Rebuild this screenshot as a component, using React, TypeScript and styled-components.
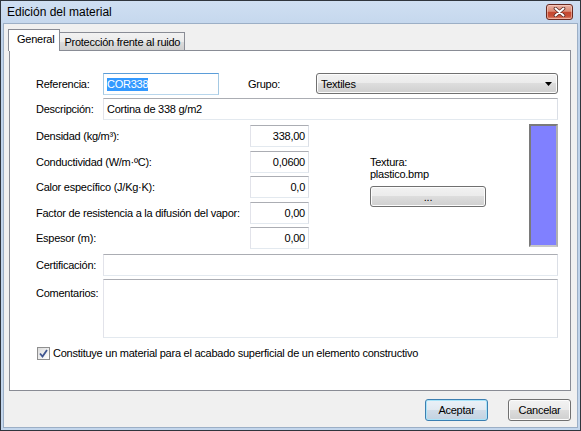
import React from "react";
import styled, { createGlobalStyle, css } from "styled-components";

const Global = createGlobalStyle`
  html, body { margin: 0; padding: 0; background: #fff; }
  body {
    width: 581px; height: 431px; overflow: hidden;
    font-family: "Liberation Sans", Arial, sans-serif;
    font-size: 11px; letter-spacing: -0.25px; color: #000;
  }
  * { box-sizing: border-box; }
`;

const Window = styled.div`
  width: 581px;
  height: 431px;
  border: 1px solid #2f353d;
  background: linear-gradient(#cfdff2, #bed2ea 40px, #c3d6ec);
  padding: 0 2px 2px 2px;
  display: flex;
  flex-direction: column;
`;

const TitleBar = styled.div`
  height: 22px;
  flex: none;
  display: flex;
  align-items: center;
  justify-content: space-between;
  padding: 0 5px 0 4px;
`;

const Title = styled.span`
  font-size: 12px;
  letter-spacing: 0;
  color: #000;
`;

const CloseButton = styled.div`
  width: 27px;
  height: 16px;
  border: 1px solid #6a2a21;
  border-radius: 3px;
  background: linear-gradient(#eab4a6 0%, #db8a74 45%, #c4472f 52%, #c85038 80%, #e39078 100%);
  box-shadow: inset 0 0 0 1px rgba(255, 220, 210, 0.5);
  display: flex;
  align-items: center;
  justify-content: center;
`;

const Client = styled.div`
  flex: 1;
  display: flex;
  flex-direction: column;
  background: #f0f0f0;
  border: 1px solid #9cafc6;
  padding: 5px 6px 6px 5px;
`;

const TabStrip = styled.div`
  height: 21px;
  flex: none;
  display: flex;
  align-items: flex-end;
  position: relative;
  z-index: 1;
`;

const Tab = styled.div<{ $active?: boolean }>`
  height: 18px;
  padding: 0 4px 0 5px;
  display: flex;
  align-items: center;
  border: 1px solid #898c95;
  border-bottom: none;
  background: linear-gradient(#f2f2f2 0%, #ebebeb 50%, #dddddd 50%, #cfcfcf 100%);
  margin-left: -1px;
  ${(p) =>
    p.$active &&
    css`
      height: 22px;
      margin-bottom: -1px;
      padding: 0 5px 3px 8px;
      background: #fff;
      margin-left: -1px;
      margin-right: -1px;
      position: relative;
      z-index: 2;
    `}
`;

const Panel = styled.div`
  flex: 1;
  background: #fff;
  border: 1px solid #898c95;
  padding: 22px 12px 0 26px;
  display: flex;
  flex-direction: column;
`;

const Row = styled.div<{ $mt?: number; $top?: boolean }>`
  display: flex;
  align-items: ${(p) => (p.$top ? "flex-start" : "center")};
  margin-top: ${(p) => p.$mt ?? 0}px;
`;

const FieldLabel = styled.span<{ $w: number; $pt?: number }>`
  flex: none;
  width: ${(p) => p.$w}px;
  padding-top: ${(p) => p.$pt ?? 0}px;
  white-space: nowrap;
`;

const GroupLabel = styled(FieldLabel)`
  margin-left: 29px;
`;

const TextBox = styled.div<{ $w?: number; $h?: number; $right?: boolean; $focused?: boolean }>`
  flex: ${(p) => (p.$w ? "none" : "1")};
  width: ${(p) => (p.$w ? `${p.$w}px` : "auto")};
  height: ${(p) => p.$h ?? 22}px;
  border: 1px solid;
  border-color: ${(p) =>
    p.$focused ? "#5b9dd9 #a4c9e3 #b8d6ec #a4c9e3" : "#abadb3 #dbdfe6 #e3e9ef #e2e3ea"};
  background: #fff;
  display: flex;
  align-items: ${(p) => (p.$h && p.$h > 22 ? "flex-start" : "center")};
  justify-content: ${(p) => (p.$right ? "flex-end" : "flex-start")};
  padding: 0 3px;
  white-space: nowrap;
  overflow: hidden;
`;

const Selection = styled.span`
  background: #3399ff;
  color: #fff;
  line-height: 13px;
`;

const Combo = styled.div`
  flex: 1;
  height: 21px;
  border: 1px solid #707070;
  border-radius: 3px;
  background: linear-gradient(#f2f2f2 0%, #ebebeb 50%, #dddddd 50%, #cfcfcf 100%);
  box-shadow: inset 0 0 0 1px #fcfcfc;
  display: flex;
  align-items: center;
  justify-content: space-between;
  padding: 0 5px 0 4px;
  margin-top: -1px;
`;

const Middle = styled.div`
  display: flex;
  align-items: flex-start;
  margin-top: 5px;
`;

const PropList = styled.div`
  display: grid;
  grid-template-columns: 214px 59px;
  grid-auto-rows: 22px;
  row-gap: 3.5px;
  align-items: center;
`;

const Texture = styled.div`
  margin-left: 61px;
  padding-top: 31px;
  width: 116px;
  display: flex;
  flex-direction: column;
`;

const TextureText = styled.div`
  line-height: 12px;
`;

const PushButton = styled.div<{ $w: number; $default?: boolean }>`
  width: ${(p) => p.$w}px;
  height: 22px;
  border: 1px solid #707070;
  border-radius: 3px;
  background: linear-gradient(#f2f2f2 0%, #ebebeb 50%, #dddddd 50%, #cfcfcf 100%);
  box-shadow: inset 0 0 0 1px #fcfcfc;
  display: flex;
  align-items: center;
  justify-content: center;
  ${(p) =>
    p.$default &&
    css`
      border-color: #3c7fb1;
      background: linear-gradient(#eaf1f7 0%, #e1e9f1 50%, #d0dce8 50%, #c3d2e1 100%);
      box-shadow: inset 0 0 0 1px #a9e4f9;
    `}
`;

const TextureButton = styled(PushButton)`
  margin-top: 6px;
  height: 21px;
`;

const Swatch = styled.div`
  margin-left: auto;
  margin-top: -1px;
  width: 29px;
  height: 123px;
  background: #8080ff;
  border: 2px solid;
  border-color: #7a7a7a #b0b0b0 #c8c8c8 #7a7a7a;
`;

const CheckRow = styled.div`
  display: flex;
  align-items: center;
  gap: 3px;
  margin-top: 8px;
  height: 14px;
  padding-left: 1px;
`;

const CheckBox = styled.div`
  width: 13px;
  height: 13px;
  border: 1px solid #8f8f8f;
  background: linear-gradient(135deg, #dcdcdc, #ffffff);
  padding: 1px;
  display: flex;
  align-items: center;
  justify-content: center;
`;

const ButtonRow = styled.div`
  display: flex;
  justify-content: flex-end;
  gap: 20px;
  margin-top: 8px;
`;

const props = [
  { label: "Densidad (kg/m³):", value: "338,00" },
  { label: "Conductividad (W/m·ºC):", value: "0,0600" },
  { label: "Calor específico (J/Kg·K):", value: "0,0" },
  { label: "Factor de resistencia a la difusión del vapor:", value: "0,00" },
  { label: "Espesor (m):", value: "0,00" },
];

export default function App() {
  return (
    <>
      <Global />
      <Window>
        <TitleBar>
          <Title>Edición del material</Title>
          <CloseButton>
            <svg width="13" height="10" viewBox="0 0 13 10">
              <path d="M2.5 1.5 L10.5 8.5 M10.5 1.5 L2.5 8.5" stroke="#5a2a24" strokeWidth="3.6" strokeLinecap="round" />
              <path d="M2.5 1.5 L10.5 8.5 M10.5 1.5 L2.5 8.5" stroke="#ffffff" strokeWidth="2" strokeLinecap="round" />
            </svg>
          </CloseButton>
        </TitleBar>
        <Client>
          <TabStrip>
            <Tab $active>General</Tab>
            <Tab>Protección frente al ruido</Tab>
          </TabStrip>
          <Panel>
            <Row>
              <FieldLabel $w={67}>Referencia:</FieldLabel>
              <TextBox $w={116} $focused>
                <Selection>COR338</Selection>
              </TextBox>
              <GroupLabel $w={68}>Grupo:</GroupLabel>
              <Combo>
                <span>Textiles</span>
                <svg width="7" height="4" viewBox="0 0 7 4">
                  <path d="M0 0 H7 L3.5 4 Z" fill="#000" />
                </svg>
              </Combo>
            </Row>
            <Row $mt={3}>
              <FieldLabel $w={67}>Descripción:</FieldLabel>
              <TextBox>Cortina de 338 g/m2</TextBox>
            </Row>
            <Middle>
              <PropList>
                {props.map((p) => (
                  <React.Fragment key={p.label}>
                    <span>{p.label}</span>
                    <TextBox $w={59} $right>
                      {p.value}
                    </TextBox>
                  </React.Fragment>
                ))}
              </PropList>
              <Texture>
                <TextureText>
                  Textura:
                  <br />
                  plastico.bmp
                </TextureText>
                <TextureButton $w={116}>...</TextureButton>
              </Texture>
              <Swatch />
            </Middle>
            <Row $mt={5}>
              <FieldLabel $w={67}>Certificación:</FieldLabel>
              <TextBox />
            </Row>
            <Row $mt={3} $top>
              <FieldLabel $w={67} $pt={8}>
                Comentarios:
              </FieldLabel>
              <TextBox $h={59} />
            </Row>
            <CheckRow>
              <CheckBox>
                <svg width="9" height="9" viewBox="0 0 9 9">
                  <path d="M1 4.5 L3.5 7.5 L8 1" stroke="#3f5590" strokeWidth="1.8" fill="none" />
                </svg>
              </CheckBox>
              <span>Constituye un material para el acabado superficial de un elemento constructivo</span>
            </CheckRow>
          </Panel>
          <ButtonRow>
            <PushButton $w={63} $default>
              Aceptar
            </PushButton>
            <PushButton $w={63}>Cancelar</PushButton>
          </ButtonRow>
        </Client>
      </Window>
    </>
  );
}
